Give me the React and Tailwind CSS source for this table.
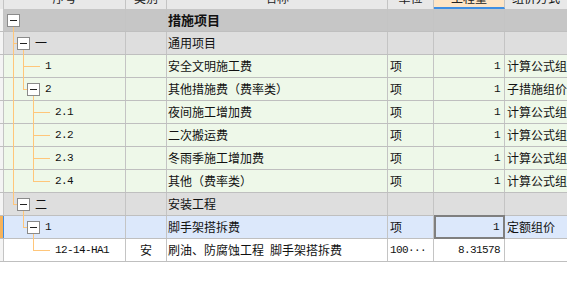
import React from "react";

const CJK = '"Noto Sans CJK SC", "Noto Sans", sans-serif';
const MONO = '"Liberation Mono", "Noto Sans CJK SC", monospace';

const rows = [
  { kind: "top", code: "", name: "措施项目" },
  { kind: "group", code: "一", pad: "pl-[31px]", name: "通用项目" },
  { kind: "item", code: "1", pad: "pl-[41px]", name: "安全文明施工费", unit: "项", qty: "1", way: "计算公式组价" },
  { kind: "item", code: "2", pad: "pl-[41px]", name: "其他措施费（费率类）", unit: "项", qty: "1", way: "子措施组价" },
  { kind: "item", code: "2.1", pad: "pl-[51px]", name: "夜间施工增加费", unit: "项", qty: "1", way: "计算公式组价" },
  { kind: "item", code: "2.2", pad: "pl-[51px]", name: "二次搬运费", unit: "项", qty: "1", way: "计算公式组价" },
  { kind: "item", code: "2.3", pad: "pl-[51px]", name: "冬雨季施工增加费", unit: "项", qty: "1", way: "计算公式组价" },
  { kind: "item", code: "2.4", pad: "pl-[51px]", name: "其他（费率类）", unit: "项", qty: "1", way: "计算公式组价" },
  { kind: "group", code: "二", pad: "pl-[31px]", name: "安装工程" },
  { kind: "sel", code: "1", pad: "pl-[41px]", name: "脚手架搭拆费", unit: "项", qty: "1", way: "定额组价" },
  { kind: "quota", code: "12-14-HA1", pad: "pl-[51px]", cat: "安", name: "刷油、防腐蚀工程\u2002脚手架搭拆费", unit: "100···", qty: "8.31578", way: "" },
];

const rowBg = {
  top: "bg-[#c6c6c6]",
  group: "bg-[#dedede]",
  item: "bg-[#eef8e9]",
  sel: "bg-[#dce8fb]",
  quota: "bg-white",
};

const isAscii = (s) => /^[\x20-\x7e·]+$/.test(s);

function Txt({ children }) {
  if (!children) return null;
  if (isAscii(children)) {
    return (
      <span className="text-[11px] tracking-[-0.6px]" style={{ fontFamily: MONO }}>
        {children}
      </span>
    );
  }
  return <span>{children}</span>;
}

function Box({ x, y }) {
  return (
    <g>
      <rect x={x + 0.5} y={y + 0.5} width="12" height="12" fill="#fff" stroke="#8a8a8a" />
      <line x1={x + 3} y1={y + 6.5} x2={x + 10} y2={y + 6.5} stroke="#222" strokeWidth="1" />
    </g>
  );
}

// Connector lines and collapse boxes for the 序号 tree column
function TreeLines() {
  const c = "#ffc67a";
  return (
    <svg className="absolute left-0 top-0 pointer-events-none" width="125" height="262">
      <g stroke={c} strokeWidth="1" fill="none" shapeRendering="crispEdges">
        <path d="M13.5 27 V204.5 M13.5 43.5 H17 M13.5 204.5 H17" />
        <path d="M23.5 50 V89.5 M23.5 66.5 H40 M23.5 89.5 H27" />
        <path d="M33.5 96 V181.5 M33.5 112.5 H50 M33.5 135.5 H50 M33.5 158.5 H50 M33.5 181.5 H50" />
        <path d="M23.5 211 V227.5 M23.5 227.5 H27" />
        <path d="M33.5 234 V250.5 M33.5 250.5 H50" />
      </g>
      <Box x={7} y={14} />
      <Box x={17} y={37} />
      <Box x={27} y={83} />
      <Box x={17} y={198} />
      <Box x={27} y={221} />
    </svg>
  );
}

function HeaderCell({ w, label, active }) {
  return (
    <div
      className={`${w} shrink-0 h-full border-r border-[#c4c4c4] flex justify-center overflow-hidden ${
        active ? "bg-[#fde5c6] border-b-2 border-b-[#3f8fe3]" : ""
      }`}
    >
      <span className="-mt-[8px] leading-[12px] text-[12px] text-[#222]">{label}</span>
    </div>
  );
}

export default function App() {
  return (
    <div
      className="relative w-[567px] h-[286px] overflow-hidden bg-white text-[12px] text-[#111]"
      style={{ fontFamily: CJK }}
    >
      <div className="flex h-[9px] bg-[#e8e8e8]">
        <div className="w-[4px] shrink-0 border-r border-[#c4c4c4]" />
        <HeaderCell w="w-[122px]" label="序号" />
        <HeaderCell w="w-[41px]" label="类别" />
        <HeaderCell w="w-[221px]" label="名称" />
        <HeaderCell w="w-[46px]" label="单位" />
        <HeaderCell w="w-[71px]" label="工程量" active />
        <div className="flex-1 flex justify-center overflow-hidden">
          <span className="-mt-[8px] leading-[12px] whitespace-nowrap">组价方式</span>
        </div>
      </div>

      {rows.map((r, i) => {
        const bg = rowBg[r.kind];
        const sel = r.kind === "sel";
        return (
          <div key={i} className={`flex h-[23px] border-b border-[#bfbfbf] ${bg}`}>
            <div
              className={`w-[4px] shrink-0 border-r ${
                sel ? "bg-[#f6b35c] border-[#3c8ce6]" : "bg-[#f4f4f4] border-[#c4c4c4]"
              }`}
            />
            <div className={`w-[122px] shrink-0 border-r border-[#c4c4c4] flex items-center ${r.pad || ""}`}>
              <Txt>{r.code}</Txt>
            </div>
            <div className="w-[41px] shrink-0 border-r border-[#c4c4c4] flex items-center justify-center">
              {r.cat}
            </div>
            <div
              className={`w-[221px] shrink-0 border-r border-[#c4c4c4] flex items-center pl-[1px] whitespace-nowrap overflow-hidden ${
                r.kind === "top" ? "font-bold text-[13px]" : ""
              }`}
            >
              {r.name}
            </div>
            <div className="w-[46px] shrink-0 border-r border-[#c4c4c4] flex items-center pl-[2px] whitespace-nowrap overflow-hidden">
              <Txt>{r.unit}</Txt>
            </div>
            <div
              className={`w-[71px] shrink-0 flex items-center justify-end pr-[4px] ${
                sel ? "border-2 border-[#7f7f7f] -mt-[1px] h-[24px]" : "border-r border-[#c4c4c4]"
              }`}
            >
              <Txt>{r.qty}</Txt>
            </div>
            <div className="flex-1 flex items-center pl-[2px] whitespace-nowrap overflow-hidden">{r.way}</div>
          </div>
        );
      })}

      <TreeLines />
    </div>
  );
}
